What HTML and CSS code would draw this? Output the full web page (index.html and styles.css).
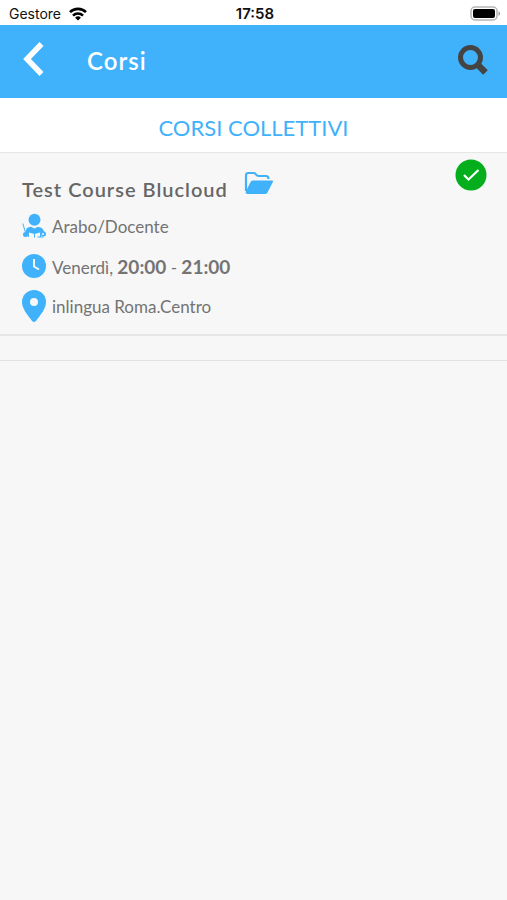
FILE: index.html
```html
<!DOCTYPE html>
<html lang="it">
<head>
    <meta charset="UTF-8">
    <meta name="viewport" content="width=device-width, initial-scale=1.0">
    <title>Corsi</title>
    <link rel="stylesheet" href="styles.css">
</head>
<body>
    <!-- Status bar -->
    <div class="status-bar">
        <div class="carrier">
            <span>Gestore</span>
            <svg width="18" height="14" viewBox="0 0 18 14" aria-hidden="true">
                <g fill="none" stroke="#000" stroke-width="2.6">
                    <path d="M1 5.2a11.3 11.3 0 0 1 16 0"/>
                    <path d="M4 8.6a7.1 7.1 0 0 1 10 0"/>
                </g>
                <path d="M9 13.6L6.1 10.8a4.1 4.1 0 0 1 5.8 0z"/>
            </svg>
        </div>
        <span class="clock">17:58</span>
        <div class="battery">
            <svg width="31" height="15" viewBox="0 0 31 15" aria-hidden="true">
                <rect x="1" y="1" width="26" height="13" rx="4" fill="#fff" stroke="#b5b5b5" stroke-width="1.5"/>
                <rect x="3" y="3" width="22" height="9" rx="2"/>
                <path d="M28.5 5.2c2 .8 2 3.8 0 4.6z" fill="#999"/>
            </svg>
        </div>
    </div>

    <!-- Header -->
    <header class="header">
        <button type="button" class="icon-button back" aria-label="Indietro">
            <svg width="22" height="36" viewBox="0 0 22 36">
                <path d="M19.500 2L5 17l14.500 15" fill="none" stroke="#fff" stroke-width="5.500"/>
            </svg>
        </button>
        <h1>Corsi</h1>
        <button type="button" class="icon-button" aria-label="Cerca">
            <svg width="30" height="30" viewBox="0 0 30 30">
                <circle cx="12.500" cy="12.500" r="10" fill="none" stroke="#444" stroke-width="5"/>
                <path d="M19 19l8.500 8.500" stroke="#444" stroke-width="6.500"/>
            </svg>
        </button>
    </header>

    <main>
        <h2 class="section-title">CORSI COLLETTIVI</h2>

        <!-- Course list -->
        <ul class="course-list">
            <li class="course">
                <div class="course-info">
                    <div class="course-heading">
                        <h3>Test Course Blucloud</h3>
                        <button type="button" class="icon-button" aria-label="Apri cartella">
                            <svg width="30" height="24" viewBox="0 0 30 24">
                                <path d="M2 20V4.500Q2 2 4.500 2h5q1.500 0 2.500 1.500t2.500 1.500H22q2.500 0 2.500 3" fill="none" stroke="#3fb2fb" stroke-width="2.200"/>
                                <path d="M6.500 11q.8-1.500 2-1.500H28q1.600 0 .9 1.400l-5.400 10.500q-.8 1.600-2.500 1.600H3.500Q1 23 1.800 20.500z" fill="#3fb2fb"/>
                            </svg>
                        </button>
                    </div>
                    <div class="detail">
                        <svg width="24" height="26" viewBox="0 0 24 26" aria-hidden="true">
                            <g fill="#3fb2fb">
                                <circle cx="12.500" cy="6.800" r="6"/>
                                <path d="M4.500 15.500q2-1.500 4.500-1.700l3.500 1.700 3.500-1.700q4 .5 5.500 3.200l1 3-2.500 1-2-1.500-5.500 1.500-5.500-1.500-2 2-2-1z"/>
                                <circle cx="3.500" cy="21.500" r="2.500"/>
                                <circle cx="21.500" cy="21" r="2.500"/>
                            </g>
                            <path d="M.8 10.500l3 10M6.500 19.500v4.500M18.500 19.500v4.500M15.500 24h6M12.500 21v3.500" fill="none" stroke="#3fb2fb"/>
                            <circle cx="21" cy="21" r="1" fill="#f7f7f7"/>
                        </svg>
                        <span>Arabo/Docente</span>
                    </div>
                    <div class="detail">
                        <svg width="24" height="26" viewBox="0 0 24 26" aria-hidden="true">
                            <circle cx="12" cy="13" r="12" fill="#3fb2fb"/>
                            <path d="M12 6v7.500l5 3" fill="none" stroke="#f7f7f7" stroke-width="2"/>
                        </svg>
                        <span>Venerdì, <b>20:00</b> - <b>21:00</b></span>
                    </div>
                    <div class="detail">
                        <svg width="24" height="32" viewBox="0 0 24 32" aria-hidden="true">
                            <path d="M12 0a12 12 0 0 1 12 12c0 6-4.500 12-10.300 19.200q-1.700 1.600-3.400 0C4.500 24 0 18 0 12A12 12 0 0 1 12 0z" fill="#3fb2fb"/>
                            <circle cx="12" cy="12" r="4" fill="#f7f7f7"/>
                        </svg>
                        <span>inlingua Roma.Centro</span>
                    </div>
                </div>
                <svg class="confirmed" width="32" height="32" viewBox="0 0 32 32" role="img" aria-label="Confermato">
                    <circle cx="16" cy="16" r="15.500" fill="#04ae1c"/>
                    <path d="M9 16l4.500 4.500L23.500 11" fill="none" stroke="#fff" stroke-width="2.200"/>
                </svg>
            </li>
            <li class="empty-row"></li>
        </ul>
    </main>
</body>
</html>
```
FILE: styles.css
```css
* {
    box-sizing: border-box;
}

body {
    margin: 0;
    background-color: #f7f7f7;
    color: #737373;
    font-family: Lato, sans-serif;
}

h1, h2, h3 {
    margin: 0;
}

.status-bar {
    display: grid;
    grid-template-columns: 1fr auto 1fr;
    align-items: center;
    height: 25px;
    padding: 2px 6px 0 9px;
    background-color: #fff;
    color: #111;
    font-family: Inter, sans-serif;
    font-size: 14px;
}

.carrier {
    display: flex;
    align-items: center;
    gap: 8px;
}

.clock {
    font-size: 15px;
    font-weight: 600;
}

.battery {
    display: flex;
    justify-content: flex-end;
}

.header {
    display: flex;
    align-items: center;
    height: 73px;
    padding: 0 19px 3px 22px;
    background-color: #3fb2fb;
    color: #fff;
}

.header h1 {
    flex: 1;
    font-size: 24px;
    font-weight: 600;
    letter-spacing: 1px;
}

.icon-button {
    display: flex;
    padding: 0;
    border: none;
    background: none;
    cursor: pointer;
}

.back {
    margin-right: 43px;
}

.section-title {
    padding: 15px 12px 9px;
    border-bottom: 1px solid #e6e6e6;
    background-color: #fff;
    color: #3fb2fb;
    font-size: 22px;
    font-weight: 400;
    line-height: 30px;
    text-align: center;
}

.course-list {
    margin: 0;
    padding: 0;
    list-style: none;
}

.course {
    display: flex;
    align-items: flex-start;
    justify-content: space-between;
    padding: 6px 20px 8px 22px;
    border-bottom: 2px solid #e6e6e6;
}

.course-heading {
    display: flex;
    gap: 16px;
    padding: 12px 0 3px;
}

.course-heading h3 {
    padding-top: 4px;
    color: #666;
    font-size: 20px;
    font-weight: 600;
    letter-spacing: 1px;
    line-height: 28px;
}

.detail {
    display: flex;
    align-items: center;
    gap: 6px;
    height: 40px;
    font-size: 17px;
}

.detail b {
    font-size: 19px;
}

.confirmed {
    flex: none;
}

.empty-row {
    height: 25px;
    border-bottom: 1px solid #e2e2e2;
}
```
